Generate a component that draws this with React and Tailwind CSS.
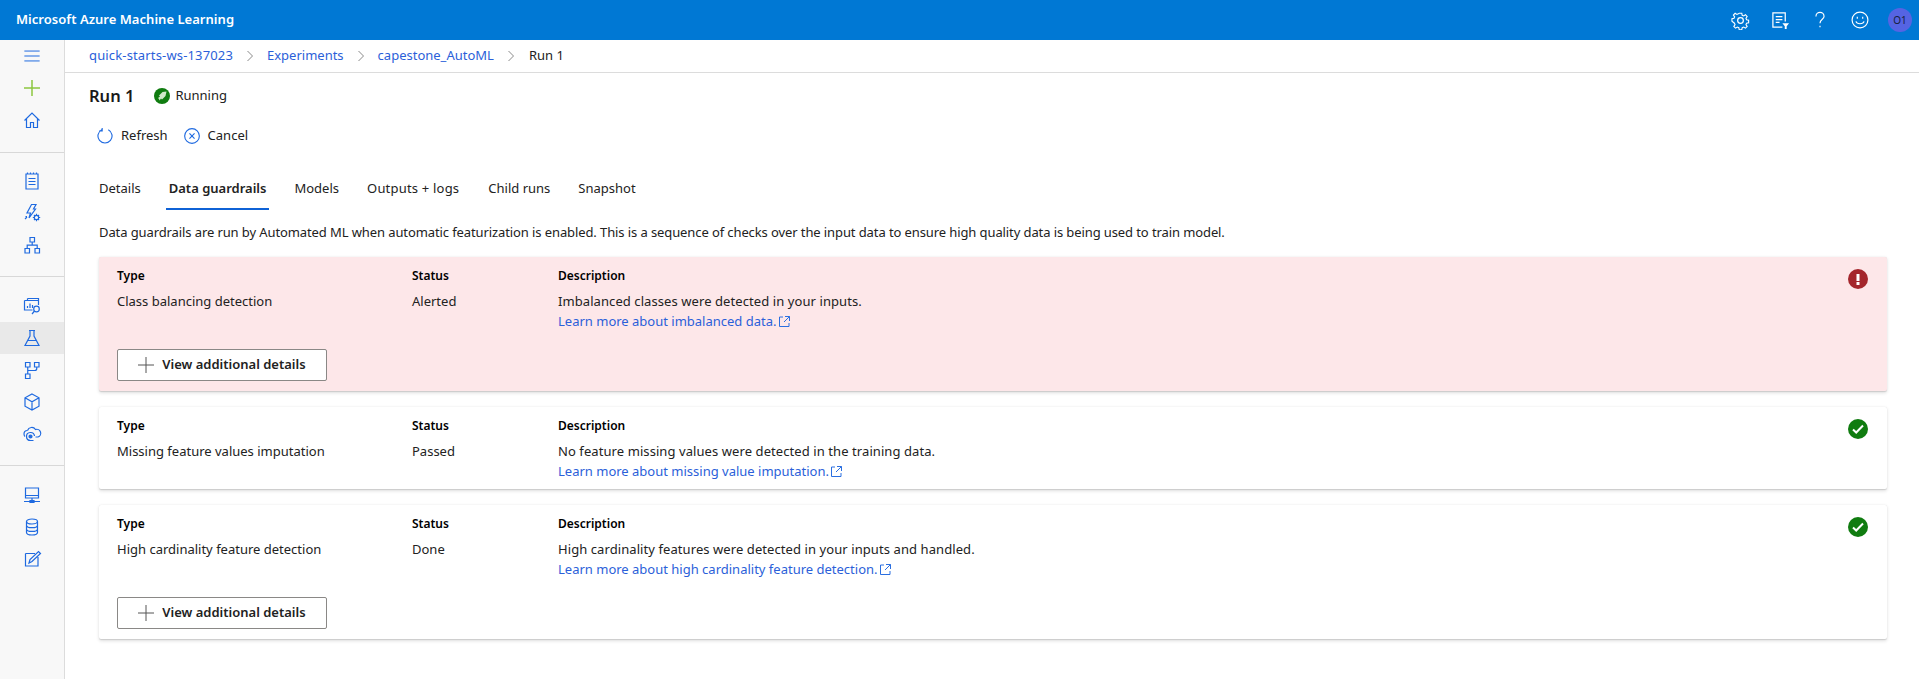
import React from "react";

const font = { fontFamily: '"Noto Sans", "Open Sans", sans-serif' };

function Ico({ children, size = 20, color = "#1f6ae0", sw = 1.2, view = 20, className = "" }) {
  return (
    <svg width={size} height={size} viewBox={`0 0 ${view} ${view}`} fill="none" stroke={color} strokeWidth={sw} className={className}>
      {children}
    </svg>
  );
}

const sideIcons = {
  menu: <path d="M1.500 4.500h17M1.500 10h17M1.500 15.500h17" strokeWidth="1.100" />,
  plus: <path d="M10 2v16M2 10h16" stroke="#8cc63f" strokeWidth="1.5" />,
  home: <path d="M2.500 10.500L10 3l7.500 7.500M4.500 9v8.500h4v-5h3v5h4V9" />,
  notebook: <path d="M4 3h12v15H4zM6.500 7.500h7M6.500 10.500h7M6.500 13.500h7M5.500 1.500v2M8.500 1.500v2M11.500 1.500v2M14.500 1.500v2" />,
  auto: (
    <>
      <path d="M9.500 1.500h4.500L11.500 6h2L7 15l1.500-5H5z" />
      <path d="M3.500 13.500h1.500M3 16l2-2" />
      <circle cx="14.500" cy="14.500" r="2.200" />
      <path d="M14.500 10.800v1.500M14.500 16.700v1.500M10.800 14.500h1.500M16.700 14.500h1.500M12 12l1 1M17 12l-1 1M12 17l1-1M17 17l-1-1" />
    </>
  ),
  tree: <path d="M8 2.500h4.500v4.500H8zM3 13.500h4.500V18H3zM13 13.500h4.500V18H13zM10.200 7v3.200M5.200 13.500v-3.300h10v3.300" />,
  dataset: (
    <>
      <path d="M5.500 2.500h11v2.500M2.500 4.500h14V9M2.500 4.500V14h8" />
      <path d="M5.500 2.500v2" />
      <path d="M5.500 12V10M8 12V7.500M10.500 12V9" />
      <circle cx="14.500" cy="13" r="2.800" />
      <path d="M12.500 15l-2.500 3" />
    </>
  ),
  flask: <path d="M7 2.500h6M8 2.500v5.500L3 17.500h14L12 8V2.500M5.500 12.500h9" />,
  pipeline: <path d="M3.500 2.500h4.500V7H3.500zM12.500 2.500H17V7h-4.500zM3.500 14H8v4.500H3.500zM5.750 7v7M5.750 10.500h7c1 0 2-1 2-2V7" />,
  cube: <path d="M10 2l7 3.800v8.400L10 18l-7-3.800V5.800zM3 5.800l7 4 7-4M10 9.800V18" />,
  cloud: (
    <>
      <path d="M5.500 6.500A4.500 4.500 0 0113.500 5.500a3.800 3.800 0 012.500 7.500h-2.500" />
      <path d="M5.500 6.500A3.500 3.500 0 002 10a3.500 3.500 0 001 2.500" />
      <path d="M12.500 12a4 4 0 10-4 4.500h3" />
      <circle cx="8.500" cy="12.500" r="1.500" fill="#1f6ae0" />
    </>
  ),
  compute: <path d="M3.500 3h13v10h-13zM3.500 10.500h13M10 13v3M2 16.500h16M8 15.500h4v2H8z" />,
  db: (
    <>
      <ellipse cx="10" cy="4.500" rx="5.500" ry="2.500" />
      <path d="M4.500 4.500v11c0 1.400 2.500 2.500 5.500 2.500s5.500-1.100 5.500-2.500v-11M4.500 8.200c0 1.400 2.500 2.500 5.500 2.500s5.500-1.100 5.500-2.500M4.500 11.900c0 1.400 2.500 2.500 5.500 2.500s5.500-1.100 5.500-2.500" />
    </>
  ),
  edit: <path d="M3.500 4.500H13M3.500 4.500V17H16V8M7 14l1-3.500 8.500-8 2 2-8.500 8z" />,
};

function SideItem({ name, active, size = 20 }) {
  return (
    <div className={`h-8 flex items-center justify-center ${active ? "bg-[#e9e9e9]" : ""}`}>
      <Ico size={size}>{sideIcons[name]}</Ico>
    </div>
  );
}

function Sidebar() {
  return (
    <aside className="w-[65px] shrink-0 bg-[#f8f8f8] border-r border-[#dcdcdc] flex flex-col">
      <div className="border-b border-[#d8d8d8] h-[113px]">
        <SideItem name="menu" size={18} />
        <SideItem name="plus" size={20} />
        <SideItem name="home" />
      </div>
      <div className="pt-[12px] h-[124px] border-b border-[#d8d8d8]">
        <SideItem name="notebook" />
        <SideItem name="auto" />
        <SideItem name="tree" />
      </div>
      <div className="pt-[13px] h-[189px] border-b border-[#d8d8d8]">
        <SideItem name="dataset" />
        <SideItem name="flask" active />
        <SideItem name="pipeline" />
        <SideItem name="cube" />
        <SideItem name="cloud" />
      </div>
      <div className="pt-[13px]">
        <SideItem name="compute" />
        <SideItem name="db" />
        <SideItem name="edit" />
      </div>
    </aside>
  );
}

function TopBar() {
  return (
    <header className="h-10 bg-[#0078d4] flex items-center justify-between text-white pl-[16px] pr-[7px] shrink-0">
      <span className="text-[13px] font-semibold tracking-[0.03px]">Microsoft Azure Machine Learning</span>
      <div className="flex items-center">
        <div className="w-10 flex justify-center">
          <Ico color="#fff" size={19} sw={1.3}>
            <circle cx="10" cy="10" r="3" />
            <path d="M8.500 2h3l.5 2.500 1.700.7 2.100-1.400 2 2.100-1.400 2.100.7 1.700 2.400.5v3l-2.400.5-.7 1.700 1.400 2.100-2 2-2.100-1.300-1.700.7-.5 2.400h-3l-.5-2.400-1.700-.7-2.100 1.300-2-2 1.400-2.100-.7-1.700L0 11.500v-3l2.400-.5.700-1.700L1.700 4.200l2-2.100 2.100 1.400 1.700-.7z" transform="translate(1 .5) scale(.9)" />
          </Ico>
        </div>
        <div className="w-10 flex justify-center">
          <Ico color="#fff" size={19} sw={1.3}>
            <path d="M12 17H2V2h13v9M5 6h7M5 9h7M5 12h4" />
            <path d="M12 13h7l-2.500 3v3h-2v-3z" fill="#fff" stroke="none" />
          </Ico>
        </div>
        <div className="w-10 flex justify-center">
          <Ico color="#fff" size={18} sw={1.3}>
            <path d="M5.500 6a4.500 4.500 0 119 0c0 3-4.500 3.500-4.500 7.500M10 16.500v1.500" />
          </Ico>
        </div>
        <div className="w-10 flex justify-center mr-[8px]">
          <Ico color="#fff" size={18} sw={1.3}>
            <circle cx="10" cy="10" r="8.800" />
            <path d="M5.500 11.500c1 3.500 8 3.500 9 0M7 6.500v2M13 6.500v2" />
          </Ico>
        </div>
        <div className="w-6 h-6 rounded-full bg-[#5564e3] text-[#15203c] text-[10px] flex items-center justify-center">O1</div>
      </div>
    </header>
  );
}

function Chevron() {
  return (
    <svg width="8" height="12" viewBox="0 0 8 12" fill="none" stroke="#8a8a8a" strokeWidth="1" className="mx-[13px]">
      <path d="M1.500 1l5 5-5 5" />
    </svg>
  );
}

function Breadcrumb() {
  return (
    <nav className="h-[33px] border-b border-[#dcdcdc] flex items-center pl-[24px] text-[13px] text-[#2b5fd9]">
      <span className="tracking-[0.15px]">quick-starts-ws-137023</span>
      <Chevron />
      <span>Experiments</span>
      <Chevron />
      <span>capestone_AutoML</span>
      <Chevron />
      <span className="text-[#222] ml-[1px]">Run 1</span>
    </nav>
  );
}

function RowLink({ text }) {
  return (
    <div className="flex items-center text-[#2b5fd9] text-[13px] leading-[20px]">
      <span>{text}</span>
      <svg width="11" height="11" viewBox="0 0 11 11" fill="none" stroke="#2b6fe0" strokeWidth="1" className="ml-[2px]">
        <path d="M4 1H.5v9.500H10V7M6 .500h4.500V5M10.500.500L5 6" />
      </svg>
    </div>
  );
}

function StatusIcon({ kind }) {
  if (kind === "error") {
    return (
      <div className="absolute top-[12px] right-[19px] w-5 h-5 rounded-full bg-[#a4262c] flex items-center justify-center">
        <svg width="4" height="11" viewBox="0 0 4 11" fill="#fff"><path d="M.500 0h3v7h-3zM.500 8h3v3h-3z" /></svg>
      </div>
    );
  }
  return (
    <div className="absolute top-[12px] right-[19px] w-5 h-5 rounded-full bg-[#107c10] flex items-center justify-center">
      <svg width="12" height="10" viewBox="0 0 12 10" fill="none" stroke="#fff" strokeWidth="2"><path d="M1 5.500l3.200 3L11 1.500" /></svg>
    </div>
  );
}

function Card({ type, status, desc, link, pink, details, kind }) {
  return (
    <section className={`relative rounded-[2px] pl-[18px] pt-[10px] pb-[8px] shadow-[0_1.6px_3.600px_rgba(0,0,0,0.13),0_0.300px_0.900px_rgba(0,0,0,0.11)] ${pink ? "bg-[#fde7e9]" : "bg-white"}`}>
      <StatusIcon kind={kind} />
      <div className="flex text-[13px] text-[#222] leading-[20px]">
        <div className="w-[295px]">
          <div className="text-[12px] font-semibold text-black leading-[18px] mb-[6px]">Type</div>
          <div>{type}</div>
        </div>
        <div className="w-[146px]">
          <div className="text-[12px] font-semibold text-black leading-[18px] mb-[6px]">Status</div>
          <div>{status}</div>
        </div>
        <div>
          <div className="text-[12px] font-semibold text-black leading-[18px] mb-[6px]">Description</div>
          <div className="tracking-[0.08px]">{desc}</div>
          <RowLink text={link} />
        </div>
      </div>
      {details && (
        <button className="mt-[18px] mb-[2px] w-[210px] h-[32px] bg-white border border-[#8a8886] rounded-[2px] flex items-center justify-center text-[13px] font-semibold text-[#222]">
          <svg width="16" height="16" viewBox="0 0 16 16" fill="none" stroke="#555" strokeWidth="1" className="mr-[8px]">
            <path d="M8 0v16M0 8h16" />
          </svg>
          View additional details
        </button>
      )}
    </section>
  );
}

const tabs = ["Details", "Data guardrails", "Models", "Outputs + logs", "Child runs", "Snapshot"];

export default function App() {
  return (
    <div className="w-[1919px] h-[679px] flex flex-col bg-white overflow-hidden" style={font}>
      <TopBar />
      <div className="flex flex-1 min-h-0">
        <Sidebar />
        <main className="flex-1 min-w-0">
          <Breadcrumb />
          <div className="pl-[24px] pt-[10px]">
            <div className="flex items-center h-[26px]">
              <h1 className="text-[16.500px] font-semibold text-[#1a1a1a]">Run 1</h1>
              <div className="ml-[20px] w-4 h-4 rounded-full bg-[#107c10] flex items-center justify-center">
                <svg width="12" height="12" viewBox="0 0 12 12" fill="#cfe8c8">
                  <path d="M10.500 1.500L6.500 2 3 5.500l1 1-2 1.500 1 1 .5 1.500 1.500-2 1 1L9.500 6z" />
                </svg>
              </div>
              <span className="ml-[5px] text-[13px] text-[#222]">Running</span>
            </div>
            <div className="flex items-center mt-[15px] h-[24px] pl-[8px] text-[13px] text-[#222]">
              <svg width="16" height="16" viewBox="0 0 17 17" fill="none" stroke="#1f6ae0" strokeWidth="1.200">
                <path d="M5 1.800A7.500 7.500 0 1012 1.800M5.500 0v3H2.500" />
              </svg>
              <span className="ml-[8px]">Refresh</span>
              <svg width="16" height="16" viewBox="0 0 17 17" fill="none" stroke="#1f6ae0" strokeWidth="1.200" className="ml-[16px]">
                <circle cx="8.500" cy="8.500" r="7.800" />
                <path d="M5.800 5.800l5.400 5.400M11.200 5.800l-5.400 5.400" />
              </svg>
              <span className="ml-[8px]">Cancel</span>
            </div>
            <div className="flex mt-[24px] h-[38px] pl-[7px] text-[13px] text-[#222]">
              {tabs.map((t) => (
                <div
                  key={t}
                  className={`px-[3px] pt-[7px] ${t === "Data guardrails" ? "font-semibold border-b-2 border-[#0f62d6]" : ""} ${t === "Outputs + logs" ? "tracking-[0.2px] mr-[23px]" : "mr-[22px]"}`}
                >
                  {t}
                </div>
              ))}
            </div>
            <p className="mt-[12px] pl-[10px] text-[13px] text-[#222] leading-[20px] tracking-[-0.1px]">
              Data guardrails are run by Automated ML when automatic featurization is enabled. This is a sequence of checks over the input data to ensure high quality data is being used to train model.
            </p>
            <div className="mt-[15px] ml-[10px] w-[1788px] flex flex-col gap-[16px]">
              <Card pink kind="error" details type="Class balancing detection" status="Alerted" desc="Imbalanced classes were detected in your inputs." link="Learn more about imbalanced data." />
              <Card kind="ok" type="Missing feature values imputation" status="Passed" desc="No feature missing values were detected in the training data." link="Learn more about missing value imputation." />
              <Card kind="ok" details type="High cardinality feature detection" status="Done" desc="High cardinality features were detected in your inputs and handled." link="Learn more about high cardinality feature detection." />
            </div>
          </div>
        </main>
      </div>
    </div>
  );
}
